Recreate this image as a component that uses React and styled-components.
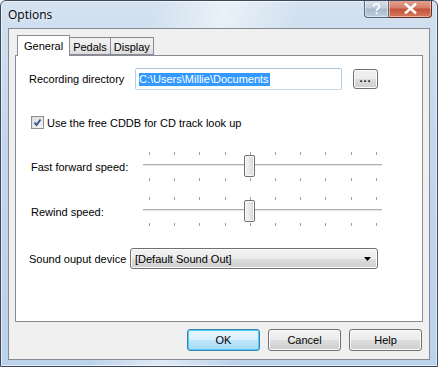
import React from 'react';
import styled, { createGlobalStyle } from 'styled-components';

const GlobalStyle = createGlobalStyle`
  html, body {
    margin: 0;
    padding: 0;
    background: #fff;
  }
  body {
    font-family: Tahoma, "Liberation Sans", Arial, sans-serif;
    font-size: 11px;
    color: #000;
  }
`

const Window = styled.div`
  width: 438px;
  height: 367px;
  box-sizing: border-box;
  display: flex;
  flex-direction: column;
  border: 1px solid #3a4a5c;
  border-radius: 6px 6px 0 0;
  background:
    linear-gradient(100deg, rgba(255,255,255,0) 30%, rgba(255,255,255,0.55) 45%, rgba(255,255,255,0) 60%),
    linear-gradient(180deg, #d3e1f0 0%, #c2d6ec 40%, #bcd2ea 100%);
  box-shadow: inset 0 0 0 1px rgba(255,255,255,0.6);
  overflow: hidden;
`

const TitleBar = styled.div`
  height: 27px;
  flex: none;
  display: flex;
  align-items: flex-start;
  justify-content: space-between;
  padding-left: 7px;
`

const Title = styled.span`
  font-family: "Open Sans", "Liberation Sans", sans-serif;
  font-size: 12px;
  line-height: 14px;
  margin-top: 7px;
  color: #000;
  text-shadow: 0 0 6px rgba(255,255,255,0.9);
`

const Captions = styled.div`
  display: flex;
  margin-right: 5px;
  margin-top: -1px;
`

const CaptionButton = styled.div`
  width: ${p => p.$w}px;
  height: 18px;
  box-sizing: border-box;
  display: flex;
  align-items: center;
  justify-content: center;
  border: 1px solid ${p => (p.$close ? '#6b2a1e' : '#58677a')};
  border-top: none;
  border-radius: ${p => (p.$close ? '0 0 4px 0' : '0 0 0 4px')};
  border-left: ${p => (p.$close ? 'none' : undefined)};
  background: ${p => (p.$close
    ? 'linear-gradient(180deg, #e3a493 0%, #d6806a 45%, #c4533a 55%, #d57a5c 100%)'
    : 'linear-gradient(180deg, #d9e2ec 0%, #c4d0dd 45%, #aab9c9 55%, #bfcfdf 100%)')};
  box-shadow: inset 0 0 0 1px rgba(255,255,255,0.45);
`

const Client = styled.div`
  flex: 1;
  margin: 0 7px 6px 7px;
  box-sizing: border-box;
  background: #f0f0f0;
  border: 1px solid #838b95;
  display: flex;
  flex-direction: column;
  padding: 6px 7px 0 6px;
`

const TabStrip = styled.div`
  display: flex;
  align-items: flex-end;
  height: 20px;
  padding-left: 2px;
  position: relative;
  z-index: 1;
`

const Tab = styled.div`
  box-sizing: border-box;
  height: ${p => (p.$active ? 21 : 18)}px;
  padding: 0 ${p => (p.$active ? 6 : 3)}px;
  margin-left: ${p => (p.$active ? -2 : -1)}px;
  margin-bottom: ${p => (p.$active ? -1 : 0)}px;
  border: 1px solid #898c95;
  border-bottom: ${p => (p.$active ? 'none' : '1px solid #898c95')};
  background: ${p => (p.$active ? '#fff' : 'linear-gradient(180deg, #f2f2f2 0%, #ebebeb 50%, #dcdcdc 100%)')};
  display: flex;
  align-items: center;
  padding-top: ${p => (p.$active ? 0 : 2)}px;
  &:first-child { margin-left: 0; }
`

const Panel = styled.div`
  width: 408px;
  height: 267px;
  box-sizing: border-box;
  background: #fff;
  border: 1px solid #898c95;
  padding: 12px 0 0 13px;
  display: flex;
  flex-direction: column;
`

const Row = styled.div`
  display: flex;
  align-items: center;
  margin-top: ${p => p.$top || 0}px;
  margin-left: ${p => p.$indent || 0}px;
`

const Label = styled.span`
  width: ${p => p.$w}px;
  flex: none;
  color: #000;
  white-space: nowrap;
`

const TextInput = styled.div`
  width: 207px;
  height: 22px;
  box-sizing: border-box;
  border: 1px solid #abadb3;
  border-color: #a9c4dc #b5cfe5 #c2d9ec #b5cfe5;
  border-radius: 2px;
  background: #fff;
  display: flex;
  align-items: center;
  padding-left: 3px;
`

const Selected = styled.span`
  background: #3399ff;
  color: #fff;
  line-height: 13px;
  padding-right: 1px;
`

const SmallButton = styled.div`
  width: 25px;
  height: 20px;
  box-sizing: border-box;
  margin-left: 11px;
  border: 1px solid #707070;
  border-radius: 3px;
  background: linear-gradient(180deg, #f2f2f2 0%, #ebebeb 50%, #dddddd 51%, #cfcfcf 100%);
  box-shadow: inset 0 0 0 1px #fcfcfc;
  display: flex;
  align-items: center;
  justify-content: center;
  padding-bottom: 3px;
  font-weight: bold;
  letter-spacing: 1px;
`

const CheckRow = styled.label`
  display: flex;
  align-items: center;
  margin-left: 2px;
  margin-top: 26px;
`

const CheckBox = styled.span`
  width: 13px;
  height: 13px;
  box-sizing: border-box;
  border: 1px solid #8f8f8f;
  background: linear-gradient(135deg, #dcdcdc 0%, #f4f4f4 100%);
  margin-right: 3px;
  display: flex;
  align-items: center;
  justify-content: center;
`

const SliderWrap = styled.div`
  position: relative;
  width: 239px;
  height: 32px;
  flex: none;
`

const Thumb = styled.div`
  position: absolute;
  left: ${p => p.$x}px;
  top: 4px;
  width: 11px;
  height: 22px;
  box-sizing: border-box;
  border: 1px solid #707070;
  border-radius: 2px;
  background: linear-gradient(90deg, #f3f3f3 0%, #e6e6e6 60%, #d4d4d4 100%);
  box-shadow: inset 0 0 0 1px #fbfbfb;
`

const Select = styled.div`
  width: 248px;
  height: 21px;
  box-sizing: border-box;
  border: 1px solid #707070;
  border-radius: 3px;
  background: linear-gradient(180deg, #f2f2f2 0%, #ebebeb 50%, #dddddd 51%, #cfcfcf 100%);
  box-shadow: inset 0 0 0 1px #fcfcfc;
  display: flex;
  align-items: center;
  justify-content: space-between;
  padding: 0 6px 0 4px;
`

const Footer = styled.div`
  display: flex;
  justify-content: flex-end;
  gap: 8px;
  padding-top: 7px;
`

const DialogButton = styled.div`
  width: 73px;
  height: 22px;
  box-sizing: border-box;
  border: 1px solid ${p => (p.$default ? '#3c7fb1' : '#707070')};
  border-radius: 3px;
  background: ${p => (p.$default
    ? 'linear-gradient(180deg, #eaf6fd 0%, #d9f0fc 50%, #bee6fd 51%, #a7d9f5 100%)'
    : 'linear-gradient(180deg, #f2f2f2 0%, #ebebeb 50%, #dddddd 51%, #cfcfcf 100%)')};
  box-shadow: inset 0 0 0 1px ${p => (p.$default ? '#48d0f8' : '#fcfcfc')};
  display: flex;
  align-items: center;
  justify-content: center;
`

const ticks = [0, 1, 2, 3, 4, 5, 6, 7, 8, 9];

const Slider = ({ value }) => (
  <SliderWrap>
    <svg width="239" height="32" style={{ display: 'block' }}>
      {ticks.map(i => {
        const x = Math.round(6 + i * 25.2) + 0.5;
        return (
          <g key={i} stroke="#a0a0a0">
            <line x1={x} y1="1" x2={x} y2="4" />
            <line x1={x} y1="27" x2={x} y2="30" />
          </g>
        );
      })}
      <line x1="0" y1="13.5" x2="239" y2="13.5" stroke="#b0b0b0" />
      <line x1="0" y1="14.5" x2="239" y2="14.5" stroke="#e7e7e7" />
    </svg>
    <Thumb $x={value} />
  </SliderWrap>
);

const App = () => (
  <>
    <GlobalStyle />
    <Window>
      <TitleBar>
        <Title>Options</Title>
        <Captions>
          <CaptionButton $w={25}>
            <svg width="9" height="12" viewBox="0 0 9 12">
              <path d="M1.5 3.5 Q1.5 1 4.5 1 Q7.5 1 7.5 3.5 Q7.5 5 5.5 6 Q4.5 6.6 4.5 8" fill="none" stroke="#fff" strokeWidth="1.6" />
              <rect x="3.7" y="9.3" width="1.8" height="1.8" fill="#fff" />
            </svg>
          </CaptionButton>
          <CaptionButton $w={43} $close>
            <svg width="13" height="11" viewBox="0 0 13 11">
              <path d="M2 1.5 L11 9.5 M11 1.5 L2 9.5" stroke="#fff" strokeWidth="2.6" strokeLinecap="square" />
            </svg>
          </CaptionButton>
        </Captions>
      </TitleBar>
      <Client>
        <TabStrip>
          <Tab $active>General</Tab>
          <Tab>Pedals</Tab>
          <Tab>Display</Tab>
        </TabStrip>
        <Panel>
          <Row>
            <Label $w={106}>Recording directory</Label>
            <TextInput><Selected>C:\Users\Millie\Documents</Selected></TextInput>
            <SmallButton>...</SmallButton>
          </Row>
          <CheckRow>
            <CheckBox>
              <svg width="9" height="9" viewBox="0 0 9 9">
                <path d="M1.5 4.5 L3.5 7 L7.5 1.5" fill="none" stroke="#2f4f8f" strokeWidth="1.8" />
              </svg>
            </CheckBox>
            Use the free CDDB for CD track look up
          </CheckRow>
          <Row $top={22} $indent={2}>
            <Label $w={112}>Fast forward speed:</Label>
            <Slider value={101} />
          </Row>
          <Row $top={13} $indent={2}>
            <Label $w={112}>Rewind speed:</Label>
            <Slider value={101} />
          </Row>
          <Row $top={20}>
            <Label $w={101}>Sound ouput device</Label>
            <Select>
              [Default Sound Out]
              <svg width="7" height="4" viewBox="0 0 7 4"><path d="M0 0 H7 L3.5 4 Z" fill="#000" /></svg>
            </Select>
          </Row>
        </Panel>
        <Footer>
          <DialogButton $default>OK</DialogButton>
          <DialogButton>Cancel</DialogButton>
          <DialogButton>Help</DialogButton>
        </Footer>
      </Client>
    </Window>
  </>
);

export default App;
